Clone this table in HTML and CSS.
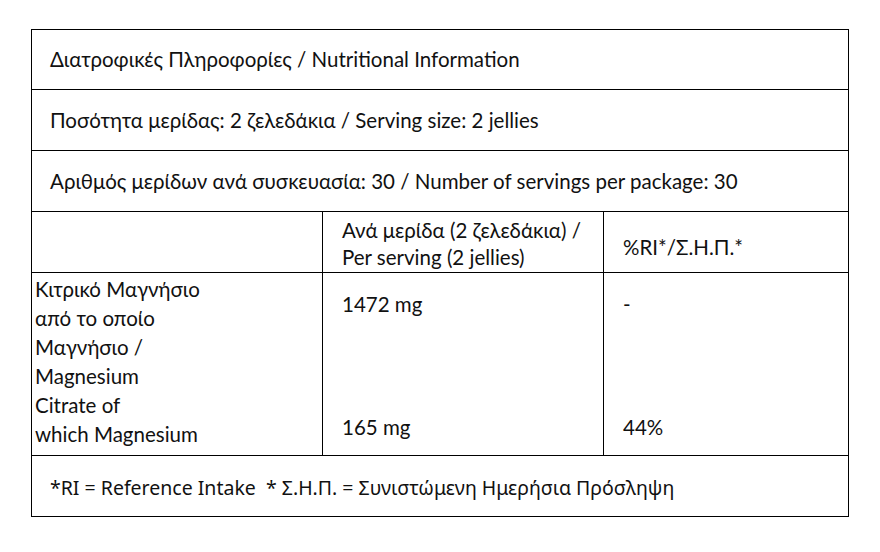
FILE: index.html
```html
<!DOCTYPE html>
<html lang="el">
<head>
<meta charset="utf-8">
<title>Nutritional Information</title>
<link rel="stylesheet" href="styles.css">
</head>
<body>
<table class="facts">
  <colgroup>
    <col class="c1">
    <col class="c2">
    <col class="c3">
  </colgroup>
  <tr class="row-full">
    <td colspan="3" class="full">Διατροφικές Πληροφορίες / Nutritional Information</td>
  </tr>
  <tr class="row-full">
    <td colspan="3" class="full">Ποσότητα μερίδας: 2 ζελεδάκια / Serving size: 2 jellies</td>
  </tr>
  <tr class="row-full">
    <td colspan="3" class="full">Αριθμός μερίδων ανά συσκευασία: 30 / Number of servings per package: 30</td>
  </tr>
  <tr class="row-head">
    <td class="blank"></td>
    <td class="head-mid">Ανά μερίδα (2 ζελεδάκια) /<br>Per serving (2 jellies)</td>
    <td class="head-right">%RI*/Σ.Η.Π.*</td>
  </tr>
  <tr class="row-data">
    <td class="name">Κιτρικό Μαγνήσιο<br>από το οποίο<br>Μαγνήσιο /<br>Magnesium<br>Citrate of<br>which Magnesium</td>
    <td class="val"><p class="v1">1472 mg</p><p class="v2">165 mg</p></td>
    <td class="val"><p class="v1">-</p><p class="v2">44%</p></td>
  </tr>
  <tr class="row-foot">
    <td colspan="3" class="foot">*RI = Reference Intake&nbsp; * Σ.Η.Π. = Συνιστώμενη Ημερήσια Πρόσληψη</td>
  </tr>
</table>
</body>
</html>
```

FILE: styles.css
```css
html, body {
  margin: 0;
  padding: 0;
  background: #ffffff;
}
body {
  padding: 29px 0 0 31px;
  color: #111111;
  font-family: "Lato", "Open Sans", sans-serif;
  font-size: 20.5px;
}
.facts {
  border-collapse: collapse;
  width: 817px;
  table-layout: fixed;
}
.c1 { width: 291px; }
.c2 { width: 281px; }
.c3 { width: 245px; }
.facts td {
  border: 1px solid #000;
  padding: 0;
  line-height: 29px;
  vertical-align: middle;
}
.row-full { height: 61px; }
.row-full:first-child { height: 60px; }
.full { padding-left: 18px !important; }
.row-head { height: 61px; }
.head-mid {
  padding: 4px 0 0 19px !important;
  line-height: 27px !important;
}
.head-right {
  padding: 11px 0 0 19px !important;
}
.row-data { height: 183px; }
.row-data td { vertical-align: top; }
.name {
  padding: 2px 0 0 3px !important;
}
.val {
  padding: 17px 0 0 19px !important;
}
.val p { margin: 0; }
.val .v2 { margin-top: 94px; }
.row-foot { height: 61px; }
.foot {
  padding: 2px 0 0 18px !important;
  font-family: "Noto Sans", "Open Sans", sans-serif;
  font-size: 19.5px;
}
```
